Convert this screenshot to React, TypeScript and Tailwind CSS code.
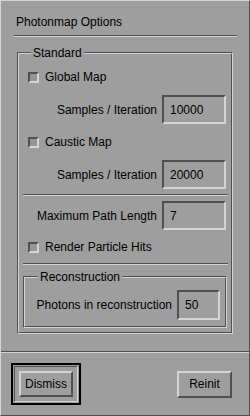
const font = { fontFamily: '"Liberation Sans", Arial, sans-serif' };

const Sep = ({ className = "" }) => (
    <div className={`h-[2px] border-t border-t-[#505050] border-b border-b-[#d4d4d4] ${className}`} />
);

const Field = ({ value, w = "w-[64px]", h = "h-[29px]" }) => (
    <div className={`${w} ${h} shrink-0 flex items-center pl-[6px] border-2 border-t-[#505050] border-l-[#505050] border-b-[#d4d4d4] border-r-[#d4d4d4] text-black`}>
        {value}
    </div>
);

const Check = ({ label }) => (
    <div className="h-[22px] flex items-center pl-[9px] gap-[6px]">
        <div className="w-[11px] h-[11px] border-2 border-t-[#505050] border-l-[#505050] border-b-[#d4d4d4] border-r-[#d4d4d4] bg-[#969696]" />
        <span>{label}</span>
    </div>
);

const Row = ({ label, value, className = "" }) => (
    <div className={`flex items-center justify-end gap-[5px] pr-[5px] ${className}`}>
        <span>{label}</span>
        <Field value={value} />
    </div>
);

// etched frame with a title sitting on the top line
const Frame = ({ title, left, className = "", children }) => (
    <div className={`relative border border-t-[#505050] border-l-[#505050] border-b-[#d4d4d4] border-r-[#d4d4d4] ${className}`}>
        <div className="h-full border border-t-[#d4d4d4] border-l-[#d4d4d4] border-b-[#505050] border-r-[#505050]">
            {children}
        </div>
        <span className={`absolute -top-[7px] ${left} px-[2px] leading-[14px] bg-[#9e9e9e]`}>{title}</span>
    </div>
);

export default function App() {
    return (
        <div style={font} className="w-[250px] h-[416px] flex flex-col bg-[#9e9e9e] text-[12px] leading-[14px] text-black border border-t-[#d4d4d4] border-l-[#d4d4d4] border-b-[#505050] border-r-[#505050]">
            <div className="h-[350px] flex flex-col">
                <div className="pl-[15px] pt-[14px] h-[28px]">Photonmap Options</div>
                <Sep className="ml-[13px] mr-[12px] mt-[6px]" />
                <Frame title="Standard" left="left-[13px]" className="mx-[16px] mt-[15px] h-[282px]">
                    <div className="pt-[12px] flex flex-col">
                        <Check label="Global Map" />
                        <Row label="Samples / Iteration" value="10000" className="mt-[7px]" />
                        <div className="mt-[7px]"><Check label="Caustic Map" /></div>
                        <Row label="Samples / Iteration" value="20000" className="mt-[7px]" />
                        <Sep className="ml-[4px] mr-[3px] mt-[5px]" />
                        <Row label="Maximum Path Length" value="7" className="mt-[5px]" />
                        <div className="mt-[6px]"><Check label="Render Particle Hits" /></div>
                        <Sep className="ml-[4px] mr-[3px] mt-[5px]" />
                        <Frame title="Reconstruction" left="left-[14px]" className="mx-[4px] mt-[11px] h-[52px]">
                            <div className="flex items-center justify-end gap-[5px] pr-[5px] pt-[12px]">
                                <span>Photons in reconstruction</span>
                                <Field value="50" w="w-[43px]" h="h-[30px]" />
                            </div>
                        </Frame>
                    </div>
                </Frame>
            </div>
            <Sep />
            <div className="flex-1 flex items-center justify-between pl-[10px] pr-[17px]">
                <div className="border-2 border-black p-[1px]">
                    <div className="border border-t-[#505050] border-l-[#505050] border-b-[#d4d4d4] border-r-[#d4d4d4] p-[4px]">
                        <button className="w-[54px] h-[26px] border-2 border-t-[#d4d4d4] border-l-[#d4d4d4] border-b-[#505050] border-r-[#505050] flex items-center justify-center">Dismiss</button>
                    </div>
                </div>
                <button className="w-[55px] h-[27px] border-2 border-t-[#d4d4d4] border-l-[#d4d4d4] border-b-[#505050] border-r-[#505050] flex items-center justify-center">Reinit</button>
            </div>
        </div>
    );
}
